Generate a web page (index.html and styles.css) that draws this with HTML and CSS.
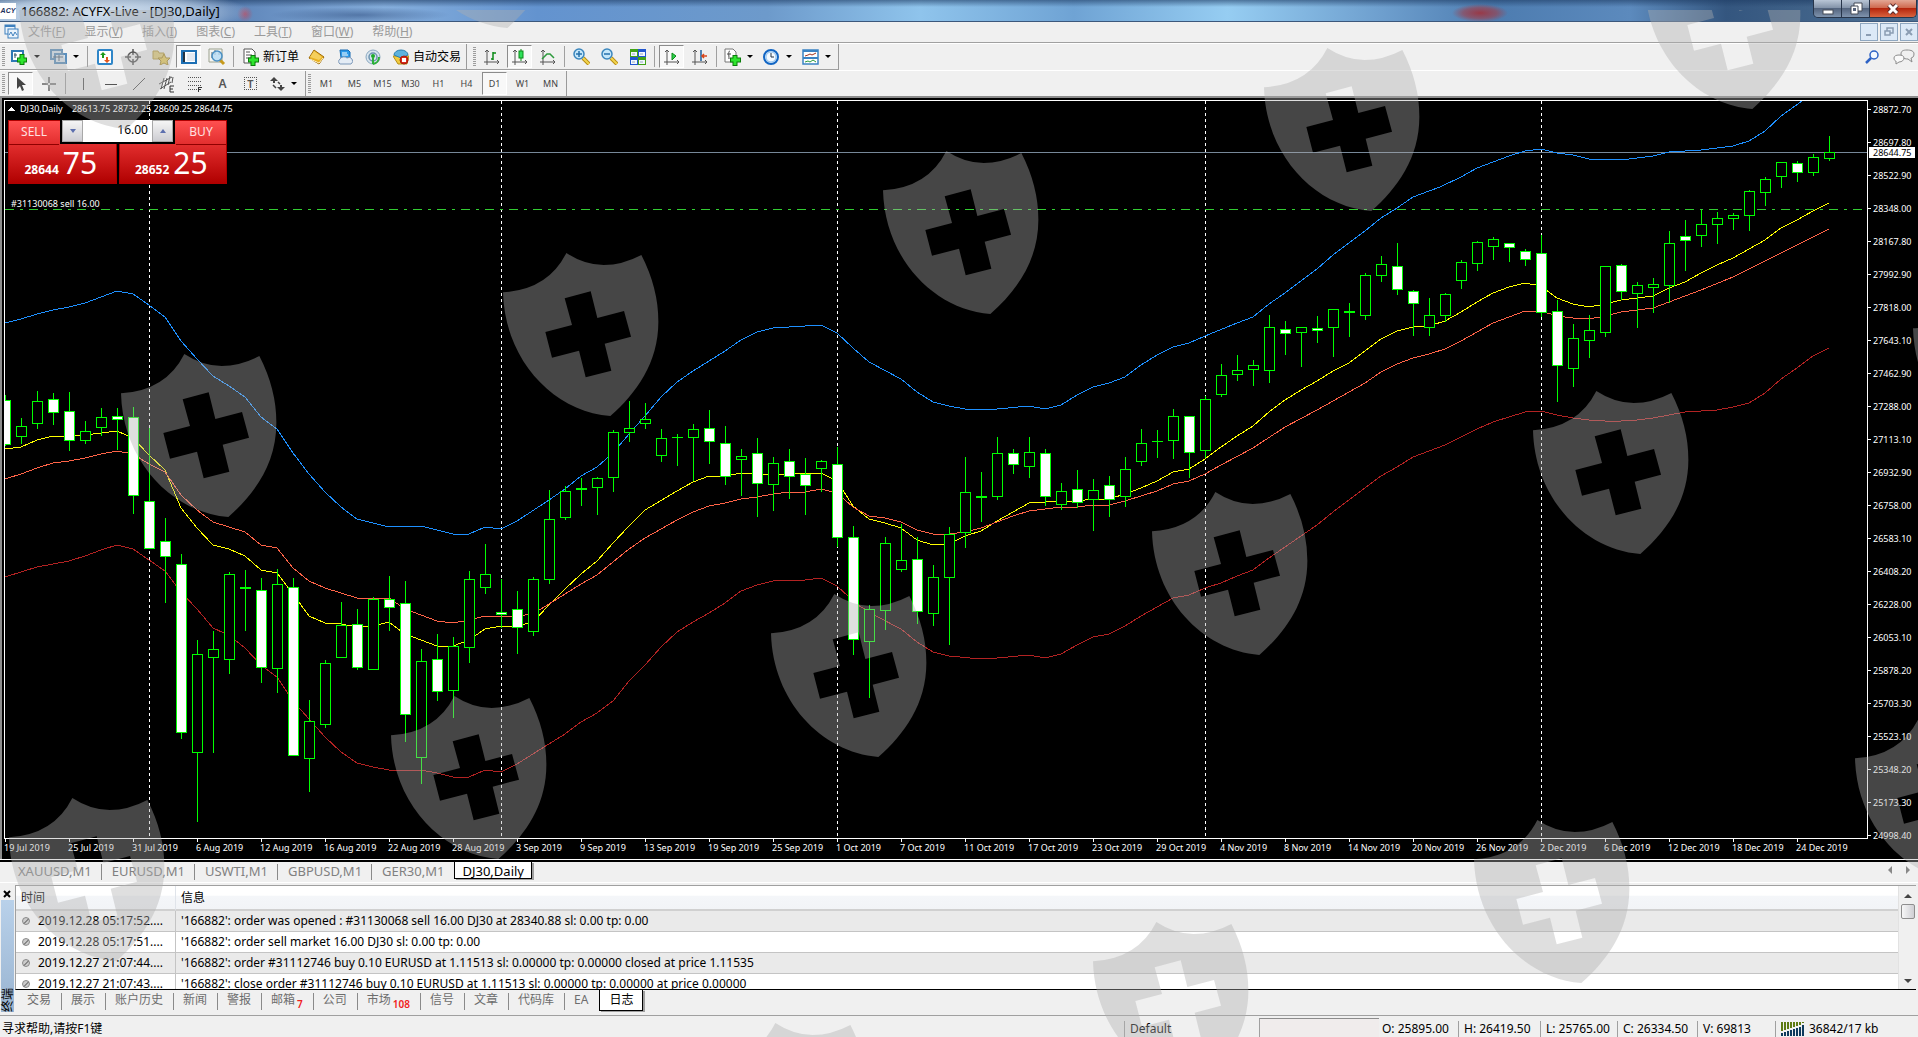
FILE: index.html
```
<!DOCTYPE html>
<html lang="zh-CN">
<head>
<meta charset="utf-8">
<title>166882: ACYFX-Live - [DJ30,Daily]</title>
<link rel="stylesheet" href="styles.css">
</head>
<body>
<header class="titlebar">
  <span class="app-logo">ACY</span>
  <h1 class="title">166882: ACYFX-Live - [DJ30,Daily]</h1>
  <div class="window-buttons">
    <button class="win-btn" aria-label="Minimize"><svg width="14" height="14"><rect x="2" y="8" width="10" height="4" fill="#fff" stroke="#444b57"/></svg></button>
    <button class="win-btn" aria-label="Restore"><svg width="14" height="14"><path d="M5 1h8v8h-8z" fill="#fff" stroke="#444b57"/><path d="M2 4h7v8h-7z" fill="#fff" stroke="#444b57"/><path d="M4 6h3v3h-3z" fill="#56627a"/></svg></button>
    <button class="win-btn win-close" aria-label="Close"><svg width="14" height="14"><path d="M3 3l8 8M11 3l-8 8" stroke="#5a2a2a" stroke-width="5"/><path d="M3 3l8 8M11 3l-8 8" stroke="#fff" stroke-width="3"/></svg></button>
  </div>
</header>

<nav class="menubar">
  <svg class="menu-icon" width="16" height="16"><rect x="1" y="1" width="10" height="9" fill="#eaf3fb" stroke="#3f80bd"/><path d="M1 2h10" stroke="#3f80bd" stroke-width="2"/><rect x="4" y="5" width="10" height="9" fill="#eaf3fb" stroke="#3f80bd"/><path d="M5 11l2-3 2 4 2-4 2 3" fill="none" stroke="#3f80bd"/></svg>
  <a href="#file">文件(<u>F</u>)</a>
  <a href="#view">显示(<u>V</u>)</a>
  <a href="#insert">插入(<u>I</u>)</a>
  <a href="#charts">图表(<u>C</u>)</a>
  <a href="#tools">工具(<u>T</u>)</a>
  <a href="#window">窗口(<u>W</u>)</a>
  <a href="#help">帮助(<u>H</u>)</a>
  <div class="mdi-buttons">
    <button aria-label="Minimize chart"><svg width="12" height="12"><path d="M3 9h5" stroke="#8b9db3" stroke-width="2"/></svg></button>
    <button aria-label="Restore chart"><svg width="12" height="12"><path d="M4 5v-3h6v5h-3M2 5h5v4h-5z" fill="none" stroke="#8b9db3" stroke-width="1.5"/></svg></button>
    <button aria-label="Close chart"><svg width="12" height="12"><path d="M3 3l6 6M9 3l-6 6" stroke="#8b9db3" stroke-width="2"/></svg></button>
  </div>
</nav>

<div class="toolrow main-tools">
  <div class="strip">
    <i class="grip"></i>
    <button class="tool drop" aria-label="New chart"><svg width="17" height="16"><rect x="1" y="2" width="11" height="10" fill="#fff" stroke="#2f79b5" stroke-width="2"/><path d="M4 4v5M3 6h3" stroke="#356"/><path d="M11 5v11M6 11h10" stroke="#0a7d0a" stroke-width="5"/><path d="M11 6v9M7 11h8" stroke="#2ee52e" stroke-width="3"/></svg></button>
    <button class="tool drop" aria-label="Profiles"><svg width="17" height="16"><rect x="1" y="1" width="11" height="9" fill="#d5e4f0" stroke="#5b8fbd" stroke-width="2"/><rect x="5" y="5" width="11" height="9" fill="#dce8f2" stroke="#5b8fbd" stroke-width="2"/><path d="M3 8h10M9 6v6" stroke="#567"/></svg></button>
    <i class="sep"></i>
    <button class="tool" aria-label="Market watch"><svg width="16" height="16"><rect x="1" y="1" width="14" height="14" rx="1" fill="#fff" stroke="#2f86c8" stroke-width="2"/><path d="M6 3l3 3-2 0v3H5V6H3z" fill="#1c9a1c"/><path d="M10 14l3-3-2 0V8H9v3H7z" fill="#e2571e"/></svg></button>
    <button class="tool" aria-label="Data window"><svg width="16" height="16"><circle cx="8" cy="8" r="5" fill="none" stroke="#555" stroke-width="1.5"/><path d="M8 0v6M8 10v6M0 8h6M10 8h6" stroke="#555" stroke-width="1.5"/></svg></button>
    <button class="tool" aria-label="Navigator"><svg width="18" height="16"><path d="M1 2h5l1 2h5v6H1z" fill="#e3cf7c" stroke="#b79c43"/><path d="M12 5l2 4 4 0-3 3 1 4-4-2-4 2 1-4-3-3 4 0z" fill="#e9cd5b" stroke="#a98b2c"/></svg></button>
    <button class="tool pressed" aria-label="Terminal"><svg width="16" height="14"><rect x="1" y="1" width="14" height="12" fill="#fff" stroke="#1d6fb4" stroke-width="2"/><path d="M3 2v10" stroke="#234" stroke-width="2"/><path d="M6 4h8M6 6h8M6 8h8M6 10h8" stroke="#c8d4e4"/></svg></button>
    <button class="tool" aria-label="Strategy tester"><svg width="18" height="18"><path d="M1 1h13v13H1z" fill="#f6f6f2" stroke="#9aa08e"/><path d="M4 4v6M7 2v5M11 3v4" stroke="#666"/><path d="M12 12l4 4" stroke="#c79a1b" stroke-width="3"/><circle cx="9" cy="8" r="5" fill="#b7dcf5" fill-opacity=".8" stroke="#4b90c4" stroke-width="1.5"/></svg></button>
    <i class="sep"></i>
    <button class="tool text"><svg width="16" height="18"><path d="M1 1h8l3 3v11H1z" fill="#fff" stroke="#555"/><path d="M3 4h4M3 7h6M3 10h6" stroke="#555"/><path d="M10 7v11M5 12h11" stroke="#0a7d0a" stroke-width="5"/><path d="M10 8v9M6 12h9" stroke="#2ee52e" stroke-width="3"/></svg>新订单</button>
    <button class="tool" aria-label="MetaEditor"><svg width="17" height="16"><path d="M6 1l10 7-5 7L1 9z" fill="#e8b021" stroke="#a06c08"/><path d="M6 2l8 6-3 3-9-3z" fill="#f5cf5c"/><path d="M2 10l9 4 4-5" fill="none" stroke="#fff0c0"/></svg></button>
    <button class="tool" aria-label="MQL5 cloud"><svg width="16" height="16"><path d="M3 1h8l2 2v6H4z" fill="#2e9bea" stroke="#1668b1"/><path d="M5 4h5M5 6h6" stroke="#fff"/><path d="M3 15a3 3 0 0 1 0-5 4 3 0 0 1 7-1 3 3 0 0 1 4 6z" fill="#e4ecf5" stroke="#7b97b8"/></svg></button>
    <button class="tool" aria-label="Signals"><svg width="16" height="16"><circle cx="8" cy="8" r="7" fill="#d8e4ee" stroke="#8ba8c0"/><circle cx="8" cy="8" r="4" fill="none" stroke="#6d93b0" stroke-width="1.5"/><circle cx="8" cy="7" r="2" fill="#1faa2b"/><path d="M8 8v7M8 15a7 7 0 0 0 6-7" fill="none" stroke="#2fb13a" stroke-width="2"/></svg></button>
    <button class="tool text">
      <svg width="16" height="16"><path d="M0 7l5 8h9l2-8z" fill="#f0cb3e" stroke="#b58e16"/><path d="M1 6a7 5 0 0 1 14 0l-7 3z" fill="#5db2dd" stroke="#2b7fae"/><circle cx="11" cy="11" r="4" fill="#da2a17" stroke="#a81a0c"/><rect x="9" y="9" width="4" height="4" fill="#fff"/></svg>自动交易</button>
  </div>
  <div class="strip">
    <i class="grip"></i>
    <button class="tool" aria-label="Bar chart"><svg width="16" height="16"><path d="M3 1v15M0 13h15M1 3l2-2 2 2M13 11l2 2-2 2" fill="none" stroke="#555"/><path d="M9 3v8M9 4h3M7 10h2" stroke="#0b8b17" stroke-width="1.5"/></svg></button>
    <button class="tool pressed" aria-label="Candlesticks"><svg width="16" height="16"><path d="M3 1v15M0 13h15M1 3l2-2 2 2M13 11l2 2-2 2" fill="none" stroke="#555"/><path d="M9 0v12" stroke="#0b8b17"/><rect x="7" y="2" width="4" height="7" fill="#2ee05a" stroke="#0b8b17"/></svg></button>
    <button class="tool" aria-label="Line chart"><svg width="16" height="16"><path d="M3 1v15M0 13h15M1 3l2-2 2 2M13 11l2 2-2 2" fill="none" stroke="#555"/><path d="M2 10l5-5 3 0 4 4" fill="none" stroke="#2c9a3c" stroke-width="1.5"/></svg></button>
    <i class="sep"></i>
    <button class="tool" aria-label="Zoom in"><svg width="17" height="17"><path d="M10 10l6 6" stroke="#b98d14" stroke-width="4"/><path d="M10 10l6 6" stroke="#f2d54f" stroke-width="2"/><circle cx="6" cy="6" r="5" fill="#c5e7fa" stroke="#3b86bd" stroke-width="1.5"/><path d="M6 3v6M3 6h6" stroke="#2671ac" stroke-width="1.5"/></svg></button>
    <button class="tool" aria-label="Zoom out"><svg width="17" height="17"><path d="M10 10l6 6" stroke="#b98d14" stroke-width="4"/><path d="M10 10l6 6" stroke="#f2d54f" stroke-width="2"/><circle cx="6" cy="6" r="5" fill="#c5e7fa" stroke="#3b86bd" stroke-width="1.5"/><path d="M3 6h6" stroke="#2671ac" stroke-width="1.5"/></svg></button>
    <button class="tool" aria-label="Tile windows"><svg width="16" height="16"><path d="M0 0h8v8H0zM8 8h8v8H8z" fill="#41a317"/><path d="M8 0h8v8H8zM0 8h8v8H0z" fill="#2257cf"/><path d="M1 3h6v4H1zM9 3h6v4h-6zM1 11h6v4H1zM9 11h6v4h-6z" fill="#f2f7ff"/><path d="M2 5h3M10 5h3M2 13h3M10 13h3" stroke="#9ab"/></svg></button>
    <i class="sep"></i>
    <button class="tool pressed" aria-label="Auto scroll"><svg width="16" height="16"><path d="M3 1v15M0 13h15M1 3l2-2 2 2M13 11l2 2-2 2" fill="none" stroke="#555"/><path d="M8 4l4 3-4 4z" fill="#2ed04e" stroke="#0b8b17"/></svg></button>
    <button class="tool" aria-label="Chart shift"><svg width="16" height="16"><path d="M3 1v15M0 13h15M1 3l2-2 2 2M13 11l2 2-2 2" fill="none" stroke="#555"/><path d="M9 1v11" stroke="#1b5f9e" stroke-width="1.5"/><path d="M15 7h-5M12 5l-2 2 2 2" fill="none" stroke="#d8461b" stroke-width="1.5"/></svg></button>
    <i class="sep"></i>
    <button class="tool drop" aria-label="Templates"><svg width="17" height="18"><path d="M1 1h8l3 3v10H1z" fill="#fff" stroke="#777"/><path d="M6 3c-2 0-1 4-1 8M3 6h4" fill="none" stroke="#444"/><path d="M11 7v11M6 12h11" stroke="#0a7d0a" stroke-width="5"/><path d="M11 8v9M7 12h9" stroke="#2ee52e" stroke-width="3"/></svg></button>
    <button class="tool drop" aria-label="Periods"><svg width="17" height="16"><circle cx="8" cy="8" r="7" fill="#d9ebfb" stroke="#1266c4" stroke-width="2"/><circle cx="8" cy="8" r="5" fill="#f4faff" stroke="#8fc1ee"/><path d="M8 4v4h3" fill="none" stroke="#234"/></svg></button>
    <button class="tool drop" aria-label="Indicators"><svg width="17" height="16"><rect x="1" y="1" width="15" height="14" fill="#fff" stroke="#3a83c3" stroke-width="1.5"/><path d="M1 2h15M1 9h15" stroke="#3a83c3" stroke-width="2"/><path d="M3 7l3-1 2-1 2 1 4-2" fill="none" stroke="#a1331d"/><path d="M3 13l3-1 2 1 3-2 3 2" fill="none" stroke="#2c9a3c"/></svg></button>
  </div>
  <div class="tool-right">
    <button class="plain" aria-label="Search"><svg width="14" height="14"><circle cx="9" cy="5" r="4" fill="#f4f9ff" stroke="#2d62c5" stroke-width="1.5"/><path d="M6 8l-5 5" stroke="#2d62c5" stroke-width="2.5"/></svg></button>
    <button class="plain" aria-label="Chat"><svg width="22" height="16"><path d="M14 1c4 0 7 1 7 4s-2 4-3 4l1 4-4-3c-5 0-7-2-7-5s2-4 6-4z" fill="#f0f0f0" stroke="#8c8c8c"/><path d="M6 6c3 0 5 1 5 3s-2 4-5 4l-3 2v-3c-1 0-2-1-2-3s2-3 5-3z" fill="#fafafa" stroke="#8c8c8c"/></svg></button>
  </div>
</div>

<div class="toolrow draw-tools">
  <div class="strip">
    <i class="grip"></i>
    <button class="tool pressed" aria-label="Cursor"><svg width="16" height="16"><path d="M4 1v12l3-3 2 5 2-1-2-5h4z" fill="#444"/></svg></button>
    <button class="tool" aria-label="Crosshair"><svg width="16" height="16"><path d="M8 1v6M8 9v6M1 8h6M9 8h6" stroke="#666" stroke-width="1.5"/></svg></button>
    <i class="sep"></i>
    <button class="tool" aria-label="Vertical line"><svg class="crisp" width="16" height="16"><path d="M8 2v12" stroke="#555"/></svg></button>
    <button class="tool" aria-label="Horizontal line"><svg class="crisp" width="16" height="16"><path d="M2 8h12" stroke="#555"/></svg></button>
    <button class="tool" aria-label="Trend line"><svg width="16" height="16"><path d="M2 14L14 2" stroke="#555"/></svg></button>
    <button class="tool" aria-label="Channel"><svg width="18" height="18"><path d="M1 9L14 2M2 14L13 7M6 3l-3 11M9 3l-3 11M12 1l-2 9M15 2l-1 6" stroke="#555"/><path d="M16 11h-4v6h4M12 14h3" fill="none" stroke="#333"/></svg></button>
    <button class="tool" aria-label="Fibonacci"><svg class="crisp" width="16" height="18"><path d="M1 2h14M1 6h14M1 10h14M1 14h9" stroke="#555" stroke-dasharray="1 1"/><path d="M15 12h-4v5M11 14h3" fill="none" stroke="#333"/></svg></button>
    <button class="tool glyph" aria-label="Text">A</button>
    <button class="tool glyph" aria-label="Text label"><span class="label-box">T</span></button>
    <button class="tool drop" aria-label="Arrows"><svg width="16" height="16"><path d="M5 1l4 4-3 0v2H4V5H1z" fill="#444"/><path d="M12 15l-4-4 3 0V9h2v2h3z" fill="#444"/><path d="M4 9l3 3M9 6l2 2" stroke="#444" stroke-width="1.5"/></svg></button>
  </div>
  <div class="strip">
    <i class="grip"></i>
    <button class="tool period">M1</button>
    <button class="tool period">M5</button>
    <button class="tool period">M15</button>
    <button class="tool period">M30</button>
    <button class="tool period">H1</button>
    <button class="tool period">H4</button>
    <button class="tool period pressed">D1</button>
    <button class="tool period">W1</button>
    <button class="tool period">MN</button>
  </div>
</div>

<main class="chart">
  <svg id="chart" class="plot" viewBox="0 98 1918 761" preserveAspectRatio="xMinYMin meet" role="img" aria-label="DJ30 Daily"></svg>
  <section class="trade" aria-label="One click trading">
    <button class="side sell"><span class="side-name">SELL</span><span class="quote"><b>28644</b><em>75</em></span></button>
    <button class="side buy"><span class="side-name">BUY</span><span class="quote"><b>28652</b><em>25</em></span></button>
    <div class="volume">
      <button class="spin" aria-label="Decrease volume"><svg width="6" height="4"><path d="M0 0h6l-3 4z" fill="#5c6fae"/></svg></button>
      <input type="text" value="16.00" aria-label="Volume">
      <button class="spin" aria-label="Increase volume"><svg width="6" height="4"><path d="M0 4h6l-3-4z" fill="#5c6fae"/></svg></button>
    </div>
  </section>
</main>

<nav class="chart-tabs">
  <a href="#xauusd">XAUUSD,M1</a>
  <a href="#eurusd">EURUSD,M1</a>
  <a href="#uswti">USWTI,M1</a>
  <a href="#gbpusd">GBPUSD,M1</a>
  <a href="#ger30">GER30,M1</a>
  <a href="#dj30" class="active">DJ30,Daily</a>
  <span class="tab-scroll"><svg width="6" height="8"><path d="M5 0v8L1 4z" fill="#888"/></svg><svg width="6" height="8"><path d="M1 0v8l4-4z" fill="#888"/></svg></span>
</nav>

<section class="terminal">
  <aside class="terminal-side">
    <button class="plain" aria-label="Close terminal"><svg width="8" height="8"><path d="M1 1l6 6M7 1l-6 6" stroke="#000" stroke-width="2"/></svg></button>
    <div class="terminal-name"><span>终端</span></div>
  </aside>
  <div class="terminal-main">
    <div class="log">
      <div class="log-view">
        <table>
          <thead><tr><th class="time">时间</th><th>信息</th></tr></thead>
          <tbody>
            <tr><td class="time"><i class="dot"></i>2019.12.28 05:17:52....</td><td>'166882': order was opened : #31130068 sell 16.00 DJ30 at 28340.88 sl: 0.00 tp: 0.00</td></tr>
            <tr><td class="time"><i class="dot"></i>2019.12.28 05:17:51....</td><td>'166882': order sell market 16.00 DJ30 sl: 0.00 tp: 0.00</td></tr>
            <tr><td class="time"><i class="dot"></i>2019.12.27 21:07:44....</td><td>'166882': order #31112746 buy 0.10 EURUSD at 1.11513 sl: 0.00000 tp: 0.00000 closed at price 1.11535</td></tr>
            <tr><td class="time"><i class="dot"></i>2019.12.27 21:07:43....</td><td>'166882': close order #31112746 buy 0.10 EURUSD at 1.11513 sl: 0.00000 tp: 0.00000 at price 0.00000</td></tr>
          </tbody>
        </table>
      </div>
      <div class="scrollbar"><svg width="8" height="4"><path d="M0 4h8L4 0z" fill="#444"/></svg><i class="thumb"></i><svg width="8" height="4"><path d="M0 0h8L4 4z" fill="#444"/></svg></div>
    </div>
    <nav class="terminal-tabs">
      <a href="#trade">交易</a>
      <a href="#exposure">展示</a>
      <a href="#history">账户历史</a>
      <a href="#news">新闻</a>
      <a href="#alerts">警报</a>
      <a href="#mail">邮箱<sub>7</sub></a>
      <a href="#company">公司</a>
      <a href="#market">市场<sub>108</sub></a>
      <a href="#signals">信号</a>
      <a href="#articles">文章</a>
      <a href="#codebase">代码库</a>
      <a href="#ea">EA</a>
      <a href="#journal" class="active">日志</a>
    </nav>
  </div>
</section>

<footer class="status">
  <span class="hint">寻求帮助,请按F1键</span>
  <span>Default</span>
  <span class="blank"></span>
  <span class="ohlc">O: 25895.00</span>
  <span>H: 26419.50</span>
  <span>L: 25765.00</span>
  <span>C: 26334.50</span>
  <span>V: 69813</span>
  <span class="traffic"><svg width="24" height="14"><g fill="#5d7a12"><path d="M0 0h2v9H0zM3 0h2v8H3zM6 0h2v7H6zM9 0h2v6H9zM12 0h2v5h-2zM15 0h2v4h-2zM18 0h2v3h-2zM21 0h2v1h-2z"/></g><g fill="#0d3a5c"><path d="M0 11h2v3H0zM3 10h2v4H3zM6 9h2v5H6zM9 8h2v6H9zM12 7h2v7h-2zM15 6h2v8h-2zM18 5h2v9h-2zM21 3h2v11h-2z"/></g></svg>36842/17 kb</span>
</footer>

<svg class="shields" viewBox="0 10 1918 1027" preserveAspectRatio="xMinYMin meet" aria-hidden="true">
  <defs>
    <path id="shield" transform="scale(.3334)" fill-rule="evenodd" d="M190 0Q245 36 302 36Q358 36 415 6Q466 105 466 206C466 330 400 420 322 489C150 475 5 320 0 118Q135 110 190 0ZM185 136L207 216L127 237L147 314L228 293L248 373L325 353L305 272L384 251L363 174L283 195L263 115Z"/>
  </defs>
  <g fill="#b0b0b0" fill-opacity=".4">
    <use href="#shield" x="19" y="-34"/><use href="#shield" x="400" y="-135"/>
    <use href="#shield" x="121" y="354"/><use href="#shield" x="503" y="253"/><use href="#shield" x="883" y="151"/><use href="#shield" x="1264" y="48"/><use href="#shield" x="1645" y="-54"/>
    <use href="#shield" x="9" y="798"/><use href="#shield" x="391" y="696"/><use href="#shield" x="771" y="594"/><use href="#shield" x="1152" y="492"/><use href="#shield" x="1533" y="391"/><use href="#shield" x="1913" y="289"/>
    <use href="#shield" x="712" y="1023"/><use href="#shield" x="1093" y="922"/><use href="#shield" x="1474" y="820"/><use href="#shield" x="1855" y="719"/>
  </g>
</svg>
<script src="chart.js"></script>
</body>
</html>
```
FILE: styles.css
```
* { box-sizing: border-box; }
body {
  margin: 0;
  min-height: 100vh;
  display: flex;
  flex-direction: column;
  background: #f0f0f0;
  font: 12px/16px "Noto Sans", "Noto Sans CJK SC", sans-serif;
  color: #000;
  overflow-x: hidden;
}
button { font: inherit; color: inherit; margin: 0; padding: 0; border: 0; background: none; }
a { color: inherit; text-decoration: none; }
svg { display: block; flex: none; }
.crisp { shape-rendering: crispEdges; }

/* Title bar */
.titlebar {
  display: flex;
  align-items: center;
  height: 22px;
  border-bottom: 1px solid #3c587c;
  background:
    radial-gradient(ellipse 150px 24px at 100px 12px, rgba(214,226,238,.95), rgba(200,216,232,.7) 60%, transparent),
    radial-gradient(circle 8px at 245px 14px, rgba(190,70,90,.7), transparent),
    radial-gradient(ellipse 90px 8px at 360px 15px, rgba(40,70,120,.5), transparent),
    radial-gradient(ellipse 28px 9px at 1480px 13px, rgba(160,50,60,.9), rgba(160,60,70,.6) 60%, transparent),
    linear-gradient(rgba(30,60,100,.6), transparent 7px),
    linear-gradient(90deg, #8fb0d6, #5d84b8 12%, #85aedc 20%, #6393cf 28%, #6d9acb 40%, #8fc4ec 48%, #6fa3d4 56%, #96cdf2 64%, #6e9fce 72%, #4d7cb0 78%, #5c8abd 85%, #34567f 90%, #4f7194);
}
.app-logo {
  width: 16px;
  height: 16px;
  background: #fff;
  font: italic bold 7px/16px "Liberation Sans", sans-serif;
  color: #1c2f5c;
  text-align: center;
}
.title { margin: 0 auto 0 5px; font-size: 13px; font-weight: 400; line-height: 20px; }
.window-buttons {
  align-self: flex-start;
  display: flex;
  height: 18px;
  margin-right: 1px;
  border: 1px solid #27354a;
  border-top: 0;
  border-radius: 0 0 5px 5px;
  overflow: hidden;
}
.win-btn {
  display: flex;
  align-items: center;
  justify-content: center;
  width: 28px;
  border-right: 1px solid #27354a;
  background: linear-gradient(#b9c6d6, #8494aa 45%, #54657f 50%, #7f93ad);
}
.win-close { width: 46px; border-right: 0; background: linear-gradient(#e3a795, #cf6a50 45%, #b5260d 50%, #d9633e); }

/* Menu */
.menubar { display: flex; align-items: center; height: 21px; padding-left: 4px; color: #9a9a9a; border-bottom: 1px solid #a0a0a0; }
.menubar a { margin-left: 19px; }
.menu-icon + a { margin-left: 8px; }
.mdi-buttons { display: flex; gap: 2px; margin-left: auto; }
.mdi-buttons button {
  display: flex;
  align-items: center;
  justify-content: center;
  width: 18px;
  height: 18px;
  border: 1px solid #8fa7c0;
  background: #dce9f7;
}

/* Toolbars */
.toolrow { display: flex; height: 27px; border-top: 1px solid #fff; }
.strip {
  display: flex;
  align-items: center;
  border-right: 1px solid #9a9a9a;
  border-bottom: 1px solid #a0a0a0;
}
.main-tools .strip + .strip { padding-left: 4px; }
.draw-tools { height: 26px; }
.draw-tools .strip { border-bottom: 0; }
.grip {
  align-self: center;
  width: 3px;
  height: 20px;
  margin: 0 3px 0 2px;
  background: repeating-linear-gradient(#9c9c9c 0 1px, #f0f0f0 1px 2px);
}
.tool {
  display: flex;
  align-items: center;
  justify-content: center;
  flex: none;
  width: 25px;
  height: 23px;
  margin-right: 3px;
}
.tool.pressed {
  border: 1px solid #fff;
  border-top-color: #8c8c8c;
  border-left-color: #8c8c8c;
  background: #f8f8f8;
}
.tool.text { width: auto; margin-right: 0; padding: 0 5px; gap: 4px; }
.tool.drop { width: 39px; margin-right: 0; padding-left: 3px; justify-content: flex-start; gap: 6px; }
.tool.drop::after { content: ""; border: 3px solid transparent; border-top-color: #000; border-bottom: 0; }
.tool.glyph { font-weight: 600; color: #555; }
.label-box { width: 13px; height: 13px; border: 1px dotted #555; line-height: 11px; font-size: 11px; }
.tool.period { font-size: 9px; color: #444; }
.sep { width: 1px; height: 21px; margin: 0 4px 0 1px; background: #a0a0a0; }
.tool-right { display: flex; align-items: center; gap: 14px; margin-left: auto; padding-right: 3px; }

/* Chart */
.chart {
  position: relative;
  flex: 1;
  background: #000;
  border-top: 2px solid #8c8c8c;
  border-left: 2px solid #8c8c8c;
}
.plot { width: calc(100% + 2px); margin-left: -2px; shape-rendering: crispEdges; }
.plot text { font-size: 9px; fill: #fff; }
.plot polyline { fill: none; }
.plot .on-light { fill: #000; }

.trade {
  position: absolute;
  left: 6px;
  top: 22px;
  display: grid;
  grid-template-columns: 1fr 1fr;
  gap: 2px;
  width: 219px;
  height: 64px;
  background: #000;
}
.side {
  display: flex;
  flex-direction: column;
  color: #fff;
  border: 1px solid #b00000;
  background: linear-gradient(#ff5050, #e02c2c 40%, #b00000);
}
.side-name { width: 50px; height: 24px; border-bottom: 1px solid #8f0000; text-align: center; line-height: 22px; color: #ffe0e0; }
.buy .side-name { align-self: flex-end; }
.quote { display: flex; align-items: baseline; justify-content: center; gap: 4px; width: 100%; padding-right: 3px; line-height: 36px; }
.quote b { line-height: 16px; }
.quote em { font-style: normal; font-size: 30px; }
.volume {
  position: absolute;
  left: 52px;
  top: 0;
  display: flex;
  width: 115px;
  height: 24px;
  border: 2px solid #000;
  border-top: 0;
}
.spin { display: flex; align-items: center; justify-content: center; width: 21px; border: 1px solid #a8a8a8; background: linear-gradient(#f5f5f5, #cdcdd2); }
.volume input { flex: 1; min-width: 0; padding: 0 4px 2px; border: 0; font: inherit; text-align: right; background: #fff; }

/* Chart tabs */
.chart-tabs {
  display: flex;
  height: 24px;
  padding: 0 2px 3px 1px;
  border-top: 1px solid #fff;
  border-bottom: 1px solid #fff;
  box-shadow: inset 0 2px #000;
  font-size: 13px;
  color: #808080;
}
.chart-tabs a { height: 16px; margin-top: 4px; padding: 0 9px 0 10px; border-right: 1px solid #8a8a8a; line-height: 14px; }
.chart-tabs a:nth-last-of-type(2) { border-right-color: transparent; }
.chart-tabs a:first-child { padding-left: 17px; }
.chart-tabs .active, .terminal-tabs .active {
  height: auto;
  margin-top: 0;
  padding: 0 9px;
  color: #000;
  background: #fff;
  border: 1px solid #000;
  border-top: 0;
  box-shadow: 2px 1px #a0a0a0;
}
.chart-tabs .active { margin-top: 2px; padding: 0 7px; line-height: 18px; }
.tab-scroll { display: flex; align-items: center; gap: 12px; margin-left: auto; padding-right: 5px; }

/* Terminal */
.terminal { display: flex; height: 133px; padding-top: 2px; border-bottom: 1px solid #a0a0a0; }
.terminal-side { display: flex; flex-direction: column; align-items: center; width: 15px; padding: 3px 1px 3px 0; }
.terminal-side .plain { height: 12px; }
.terminal-name {
  flex: 1;
  display: flex;
  align-items: flex-end;
  width: 13px;
  background: linear-gradient(#b9d1ea, #99b4d1);
}
.terminal-name span { writing-mode: sideways-lr; font-size: 12px; line-height: 13px; }
.terminal-main { flex: 1; min-width: 0; }
.log { display: flex; height: 105px; margin-right: 2px; border-top: 1px solid #a0a0a0; border-left: 1px solid #a0a0a0; border-bottom: 1px solid #000; }
.log-view { flex: 1; overflow: hidden; background: #fff; }
.log table { width: 100%; table-layout: fixed; border-collapse: separate; border-spacing: 0; }
.log th { height: 25px; padding: 0 5px; text-align: left; font-weight: 400; background: linear-gradient(#fff 40%, #f4f6f9 45%, #f2f4f7); border-bottom: 2px solid #d0d0d0; }
.log td { height: 21px; padding: 0 5px; line-height: 20px; border-bottom: 1px solid #c4c4c4; white-space: nowrap; }
.log .time { width: 160px; border-right: 1px solid #c4c4c4; }
.log th.time { border-right-color: #e0e4ea; }
.log tbody tr:nth-child(odd) { background: #eaeaea; }
.dot { display: inline-block; width: 8px; height: 8px; margin: 0 8px 0 1px; border: 1px solid #888; border-radius: 50%; background: linear-gradient(135deg, #ccc 45%, #888 45% 60%, #ccc 60%); }
.scrollbar { display: flex; flex-direction: column; align-items: center; width: 18px; padding: 8px 0 6px; background: #f0f0f0; border-left: 1px solid #e2e2e2; }
.thumb { width: 14px; height: 15px; margin: 6px 0 auto; border: 1px solid #8e8e8e; border-radius: 2px; background: linear-gradient(90deg, #f7f7f7, #cfcfd4); }
.terminal-tabs { display: flex; height: 22px; padding-left: 3px; color: #6d6d6d; }
.terminal-tabs a { height: 17px; margin-top: 3px; padding: 0 10px 0 9px; border-right: 1px solid #8a8a8a; line-height: 14px; }
.terminal-tabs a:nth-last-child(2) { border-right-color: transparent; }
.terminal-tabs sub { margin-left: 2px; font-size: 10px; line-height: 10px; font-weight: 600; color: #f02020; vertical-align: -4px; }
.terminal-tabs .active { height: 21px; margin-top: 0; padding: 0 9px; line-height: 20px; border-right-color: #000; }

/* Status bar */
.status {
  display: grid;
  grid-template-columns: 1fr 135px 120px 79px 82px 77px 80px 78px 143px;
  height: 21px;
}
.status span { padding-left: 5px; margin-top: 5px; line-height: 16px; border-left: 1px solid #a0a0a0; white-space: nowrap; }
.status .hint { padding-left: 2px; border-left: 0; }
.status .blank { margin-top: 2px; border-top: 1px solid #8c8c8c; background: #f0ecec; }
.status .ohlc { padding-left: 3px; border-left: 0; }
.status .traffic { display: flex; align-items: center; gap: 4px; }

/* Tiled watermark over the whole window */
.shields { position: absolute; left: 0; top: 10px; width: 100%; pointer-events: none; }
```
FILE: chart.js
```
// Plot coordinates: one candle every 16 units, starting at x = 5.
const STEP = 16, START = 5;

// Each candle: high, body top, body bottom, low, filled (bearish)
const candles = [
[395,400,444,445,1],[418,426,436,443,0],[391,401,423,428,0],[393,399,412,424,1],[392,411,440,450,1],[421,431,440,443,0],[408,417,427,435,0],[408,416,419,449,1],
[407,417,495,513,1],[428,501,548,548,1],[518,541,556,602,1],[554,564,732,738,1],[640,654,752,821,0],[631,649,657,752,0],[572,574,659,673,0],[570,587,588,630,0],
[578,590,667,682,1],[569,584,668,692,0],[578,587,755,755,1],[700,721,758,791,0],[660,663,724,727,0],[602,625,657,657,0],[609,624,667,669,1],[597,599,669,669,0],
[576,599,607,630,1],[581,603,714,741,1],[649,661,757,783,0],[634,659,691,700,1],[637,646,690,717,0],[571,579,647,662,0],[544,574,587,593,0],[579,612,614,627,1],
[591,609,627,653,1],[577,579,631,635,0],[490,519,579,583,0],[486,491,517,519,0],[478,488,489,505,0],[477,478,487,514,0],[430,432,477,491,0],[401,428,432,441,0],
[403,419,423,428,0],[429,438,455,461,0],[434,437,437,465,0],[424,429,437,480,0],[410,428,441,463,1],[426,443,476,484,1],[449,456,459,495,0],[438,453,483,516,1],
[457,463,484,510,0],[449,461,476,498,1],[458,474,485,514,1],[460,461,468,491,0],[447,464,537,546,1],[526,537,639,654,1],[605,609,641,697,0],[537,543,610,629,0],
[524,560,569,571,0],[537,559,611,623,1],[565,577,613,625,0],[527,534,577,644,0],[457,492,532,547,0],[472,496,497,521,0],[437,453,496,499,0],[449,453,464,473,1],
[437,452,466,477,0],[449,453,496,505,1],[483,491,504,509,0],[470,489,502,507,1],[479,490,499,530,0],[476,485,499,516,1],[457,469,496,506,0],[429,443,461,465,0],
[430,441,441,457,0],[409,416,440,458,0],[416,416,452,477,1],[396,399,450,457,0],[364,375,394,396,0],[355,370,374,380,0],[360,365,369,385,0],[315,327,370,382,0],
[321,329,333,354,1],[327,327,332,366,0],[316,328,330,342,1],[309,309,327,356,0],[303,311,312,336,0],[273,275,315,319,0],[256,264,275,281,0],[243,266,289,294,1],
[290,291,303,335,1],[298,315,327,335,0],[293,294,315,321,0],[260,262,280,288,0],[241,242,263,270,0],[237,239,246,259,0],[243,243,247,261,1],[249,251,259,265,1],
[235,253,312,316,1],[300,311,365,401,1],[324,338,368,386,0],[315,330,340,357,0],[266,266,332,336,0],[264,265,291,299,1],[282,285,293,327,0],[278,284,287,312,0],
[231,243,285,302,0],[220,236,240,270,1],[210,224,235,246,0],[212,218,224,243,0],[213,215,218,229,0],[190,191,215,230,0],[177,179,192,205,0],[162,162,176,187,0],
[161,163,172,181,1],[154,157,172,175,0],[136,152,158,160,0]
];

const averages = {
'#1e90ff': '5,323 21,319 37,314 53,310 69,307 85,303 101,297 117,291 133,294 149,305 165,317 181,341 197,359 213,376 229,386 245,397 261,417 277,429 293,453 309,474 325,492 341,507 357,519 389,527 421,526 437,530 453,534 469,534 485,527 501,529 517,521 549,500 565,489 581,476 597,467 613,453 629,434 645,416 661,397 677,382 693,371 709,361 725,351 741,340 757,332 773,328 805,326 821,325 837,333 853,348 869,362 901,379 917,392 933,402 949,406 965,409 981,410 997,409 1029,406 1045,409 1061,405 1077,395 1093,387 1109,383 1125,377 1141,365 1157,355 1173,347 1189,343 1205,336 1237,323 1253,317 1269,304 1285,293 1301,281 1317,269 1333,255 1349,243 1365,231 1381,218 1397,208 1413,197 1429,191 1440,187 1461,177 1477,168 1493,162 1509,156 1525,151 1541,149 1557,153 1573,155 1589,159 1621,160 1637,158 1653,156 1669,152 1701,150 1733,146 1749,141 1765,131 1781,116 1802,101',
'#ffff00': '5,449 21,447 37,440 53,436 69,436 85,435 101,433 117,431 133,438 149,455 165,470 181,508 197,528 213,545 229,549 245,556 261,570 277,573 293,594 309,616 325,623 341,624 357,627 373,626 389,622 405,634 421,640 437,646 453,646 469,640 485,629 501,626 517,626 533,622 549,605 565,589 581,574 597,561 613,543 629,526 645,510 677,491 693,482 709,476 725,476 741,473 757,474 789,474 821,473 837,481 853,506 869,519 885,523 901,528 917,540 933,545 949,544 965,536 981,531 997,521 1013,512 1029,503 1045,502 1061,501 1077,501 1093,499 1109,499 1125,494 1141,488 1157,481 1173,472 1189,469 1205,459 1221,447 1237,436 1253,426 1269,412 1285,400 1301,390 1317,381 1333,371 1349,363 1365,351 1381,339 1397,331 1413,327 1429,326 1445,321 1461,312 1477,302 1493,293 1509,287 1525,283 1541,286 1557,298 1573,304 1589,307 1605,304 1621,300 1653,296 1669,288 1685,282 1701,273 1717,265 1733,258 1749,249 1765,240 1781,228 1797,220 1813,211 1829,203',
'#ff6347': '5,479 21,474 37,468 53,463 69,461 85,458 101,454 117,451 133,454 149,464 165,472 181,495 197,510 213,522 229,527 245,532 261,545 277,548 293,568 309,581 325,588 341,593 357,598 389,598 405,609 421,615 437,621 453,623 469,620 485,616 517,616 533,614 549,604 565,594 581,584 597,575 613,562 629,549 645,538 661,529 677,520 693,512 709,506 725,503 741,499 757,497 773,494 789,492 805,492 821,489 837,493 853,507 869,516 885,518 901,522 917,530 933,534 949,534 965,532 981,528 997,522 1013,516 1029,511 1045,509 1061,507 1077,507 1093,505 1109,505 1125,501 1141,496 1157,491 1173,484 1189,481 1205,474 1221,465 1253,448 1285,427 1317,410 1349,392 1365,383 1381,372 1397,364 1413,358 1429,354 1445,349 1461,341 1477,332 1493,323 1509,317 1525,311 1541,311 1557,316 1573,318 1589,319 1605,316 1621,312 1637,310 1653,308 1669,302 1701,290 1733,277 1765,261 1797,245 1829,229',
'#b22222': '5,577 21,572 37,567 69,561 85,556 101,550 117,545 133,549 149,560 165,571 181,592 197,609 213,628 224,633 235,640 245,648 261,665 277,677 293,701 309,719 325,737 341,752 357,763 373,767 389,770 421,770 437,773 453,777 469,777 485,770 501,772 517,764 544,747 565,734 581,722 597,713 613,701 629,681 645,665 661,647 677,632 693,622 709,613 725,603 741,591 757,585 773,581 805,580 821,578 837,586 848,596 858,605 874,615 901,629 917,642 933,652 949,656 981,659 997,658 1029,655 1045,658 1061,654 1077,645 1093,637 1109,634 1125,626 1141,616 1157,607 1173,598 1189,595 1205,588 1221,583 1237,576 1253,570 1269,558 1285,547 1317,525 1333,512 1349,500 1365,488 1381,476 1397,467 1413,457 1429,451 1445,445 1461,437 1477,429 1493,422 1509,417 1525,412 1541,411 1557,415 1573,418 1589,420 1605,421 1621,421 1637,420 1653,418 1669,415 1685,412 1717,410 1733,407 1749,403 1765,393 1781,379 1797,368 1813,356 1829,348'
};

const prices = ['28872.70','28697.80','28522.90','28348.00','28167.80','27992.90','27818.00','27643.10','27462.90','27288.00','27113.10','26932.90','26758.00','26583.10','26408.20','26228.00','26053.10','25878.20','25703.30','25523.10','25348.20','25173.30','24998.40'];
const dates = ['19 Jul','25 Jul','31 Jul','6 Aug','12 Aug','16 Aug','22 Aug','28 Aug','3 Sep','9 Sep','13 Sep','19 Sep','25 Sep','1 Oct','7 Oct','11 Oct','17 Oct','23 Oct','29 Oct','4 Nov','8 Nov','14 Nov','20 Nov','26 Nov','2 Dec','6 Dec','12 Dec','18 Dec','24 Dec'];
const months = [149, 501, 837, 1205, 1541];

const rect = (x, y, w, h, fill) => `<rect x="${x}" y="${y}" width="${w}" height="${h}" fill="${fill}"/>`;
const label = (x, y, text, cls = '') => `<text x="${x}" y="${y}" class="${cls}">${text}</text>`;
let out = '';

for (const x of months)
  for (let y = 101; y < 838; y += 6) out += rect(x, y, 1, 3, '#fff');

// Open order level, dash-dot
for (let x = 5; x < 1867; x += 24)
  out += rect(x, 209, Math.min(9, 1867 - x), 1, '#32cd32') + (x + 18 < 1867 ? rect(x + 15, 209, 3, 1, '#32cd32') : '');
out += rect(4, 152, 1863, 1, '#778899');

for (const [color, points] of Object.entries(averages))
  out += `<polyline points="${points}" stroke="${color}"/>`;

candles.forEach(([high, top, bottom, low, filled], i) => {
  const x = START + i * STEP;
  out += rect(x, high, 1, low - high + 1, '#0f0');
  const left = Math.max(x - 5, 5);
  out += rect(left, top, x + 6 - left, bottom - top + 1, '#0f0');
  if (bottom - top > 1)
    out += rect(i ? left + 1 : 5, top + 1, x + 5 - (i ? left + 1 : 5), bottom - top - 1, filled ? '#fff' : '#000');
});

// Frame, price axis and time axis
out += rect(4, 100, 1864, 1, '#fff') + rect(4, 100, 1, 739, '#fff') + rect(1867, 100, 1, 739, '#fff') + rect(4, 838, 1864, 1, '#fff');
prices.forEach((p, i) => {
  const y = 109 + i * 33;
  out += rect(1868, y, 3, 1, '#fff') + label(1873, y + 4, p);
});
out += rect(1869, 147, 46, 11, '#fff') + label(1873, 156, '28644.75', 'on-light');
dates.forEach((d, i) => {
  out += rect(5 + i * 64, 839, 1, 3, '#fff') + label(4 + i * 64, 851, d + ' 2019');
});

out += '<path d="M8 111h7l-4-4z" fill="#fff"/>';
out += label(20, 112, 'DJ30,Daily&#160;&#160;&#160; 28613.75 28732.25 28609.25 28644.75');
out += label(11, 207, '#31130068 sell 16.00');

document.getElementById('chart').innerHTML = out;
```
